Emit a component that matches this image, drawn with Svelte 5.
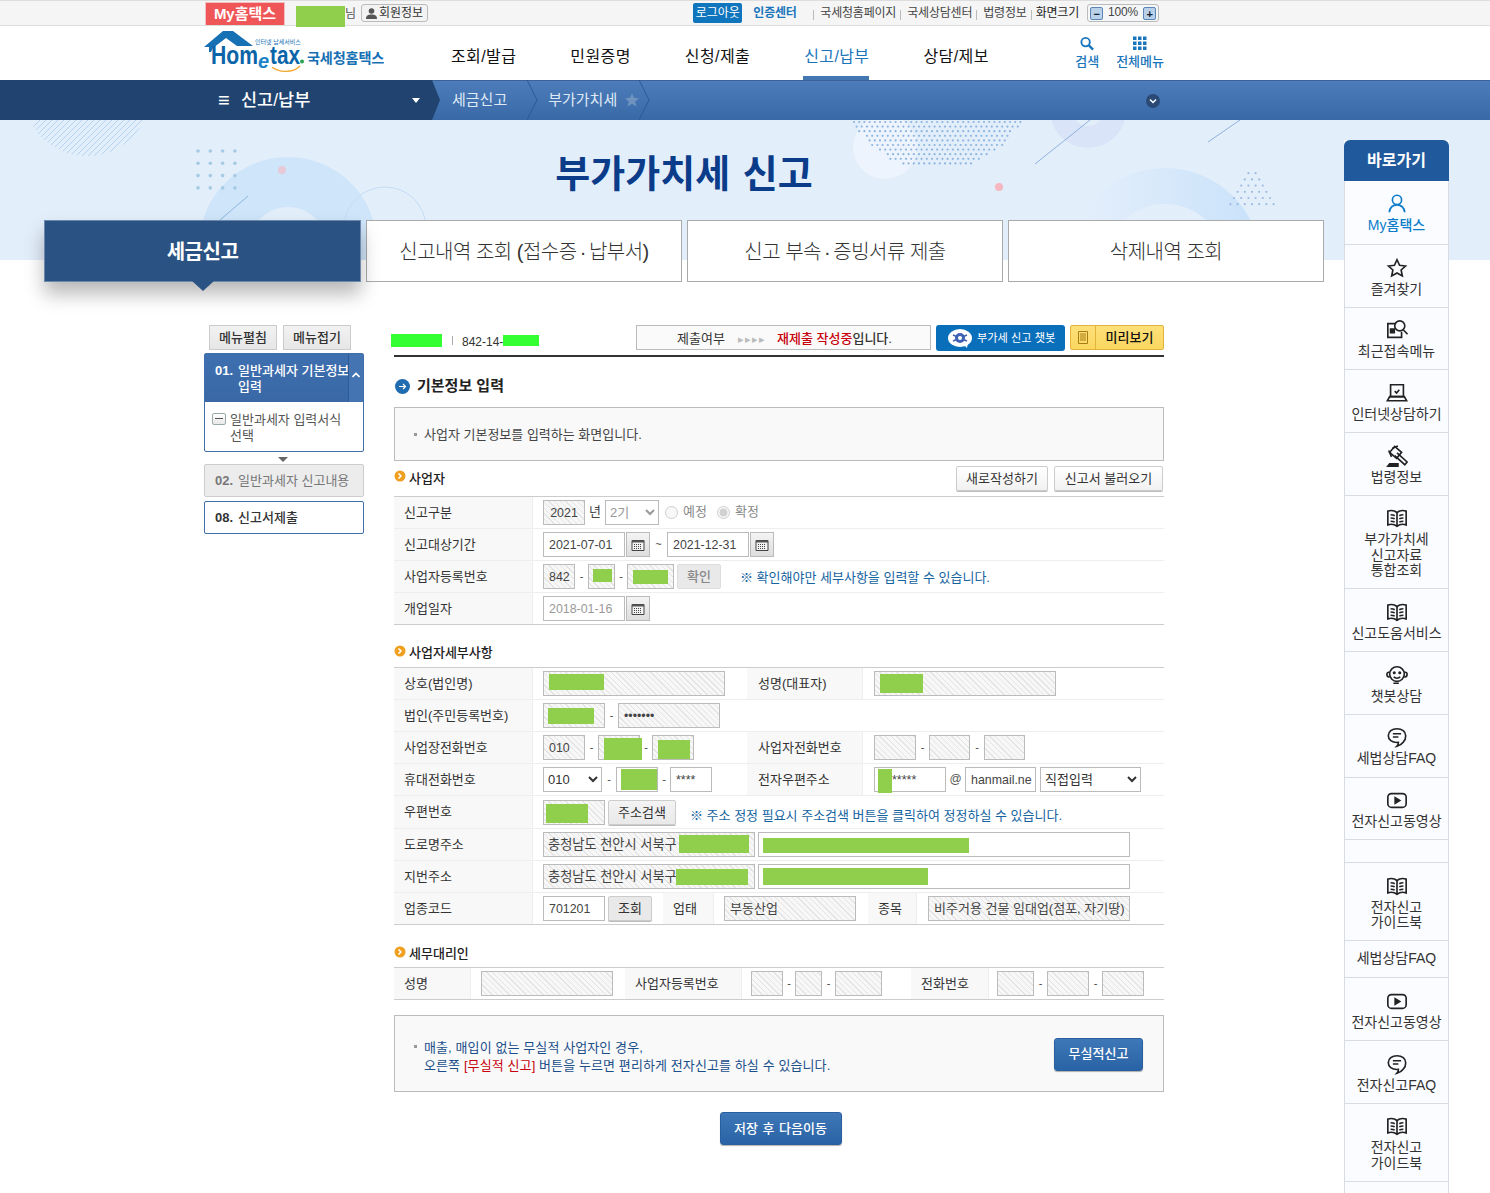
<script>
  const quick = [
    { t: ['My홈택스'], i: 'user', on: true },
    { t: ['즐겨찾기'], i: 'star' },
    { t: ['최근접속메뉴'], i: 'recent' },
    { t: ['인터넷상담하기'], i: 'laptop' },
    { t: ['법령정보'], i: 'gavel' },
    { t: ['부가가치세', '신고자료', '통합조회'], i: 'book' },
    { t: ['신고도움서비스'], i: 'book' },
    { t: ['챗봇상담'], i: 'bot' },
    { t: ['세법상담FAQ'], i: 'chat' },
    { t: ['전자신고동영상'], i: 'video' },
    { t: [], i: '' },
    { t: ['전자신고', '가이드북'], i: 'book' },
    { t: ['세법상담FAQ'], i: '' },
    { t: ['전자신고동영상'], i: 'video' },
    { t: ['전자신고FAQ'], i: 'chat' },
    { t: ['전자신고', '가이드북'], i: 'book' },
    { t: [], i: '' }
  ];
  const nav = ['조회/발급', '민원증명', '신청/제출', '신고/납부', '상담/제보'];
  const gridDots = [];
  for (let r = 0; r < 4; r++) for (let c = 0; c < 4; c++) gridDots.push([198 + c * 12.3, 31 + r * 12.3]);
  const halftone = [];
  for (let r = 0; r < 10; r++) for (let c = 0; c < 33; c++) {
    const x = 854 + c * 5.2 + (r % 2) * 2.6, y = 2 + r * 4.6;
    if (Math.hypot(x - 937, y + 45) < 96) halftone.push([x, y]);
  }
  const triDots = [];
  for (let r = 0; r < 7; r++) for (let c = 0; c <= r; c++) {
    if (r > 0) triDots.push([1252 - r * 3.6 + c * 7.2, 47 + r * 6.2]);
  }
  const hatch = [];
  for (let i = 0; i < 40; i++) hatch.push(i * 6);
</script>

{#snippet box(w, text = '', kind = 'ro', mask = null)}
  <span class="box {kind}" style:width="{w}px">{text}{#if mask}<i class="mask" style:left="{mask[0]}px" style:top="{mask[1]}px" style:width="{mask[2]}px" style:height="{mask[3]}px"></i>{/if}</span>
{/snippet}

{#snippet cal()}
  <button class="cal" type="button" aria-label="달력">
    <svg width="14" height="13" viewBox="0 0 14 13"><path d="M1 2.500h12v10H1z" fill="#f3f3f3" stroke="#444"/><path d="M1 2.500h12v2H1z" fill="#555"/><path d="M3 6.500h8M3 8.500h8M3 10.500h8" stroke="#444" stroke-dasharray="1 1"/></svg>
  </button>
{/snippet}

{#snippet bullet()}
  <svg class="bullet" width="12" height="12" viewBox="0 0 12 12"><circle cx="6" cy="6" r="5.500" fill="#f0a020"/><path d="M4.500 3.500 7 6 4.500 8.500" fill="none" stroke="#fff" stroke-width="1.500"/></svg>
{/snippet}

{#snippet icon(n)}
  <svg class="qi" class:qblue={n === 'user'} width="24" height="24" viewBox="0 0 24 24">
    {#if n === 'user'}
      <circle cx="12" cy="7.500" r="5"/><path d="M3.500 21c.8-5 4-8 8.500-8s7.700 3 8.500 8"/>
    {:else if n === 'star'}
      <path d="M12 3l2.800 6 6.500.8-4.800 4.400 1.300 6.500L12 17.400l-5.800 3.300 1.300-6.500L2.700 9.800 9.200 9z"/>
    {:else if n === 'recent'}
      <path d="M11 5H2v15h15v-6"/><path d="M5 11h4v4H5z" fill="#222"/><circle cx="15" cy="7.500" r="5.500"/><path d="M19 12l4.500 4.500"/>
    {:else if n === 'laptop'}
      <path d="M5 3h14v13H5z"/><path d="M1.500 20.500h21l-2.500-4.500H4z"/><path d="M9.500 10l2 2 3-3.500"/>
    {:else if n === 'gavel'}
      <path d="M9.500 1.500l7.500 6.500-5.500 6.500L4 8z"/><path d="M7 3.500 13 1M3 6l3 7"/><path d="M12 8.500l11 10-2.500 3-11-10"/><path d="M2 23h11v-2.500H4z" fill="#222"/>
    {:else if n === 'book'}
      <path d="M12 6C9.500 4 5 3.500 2 4.500v15c3-1 7.500-.5 10 1.500 2.500-2 7-2.500 10-1.500v-15C19 3.500 14.500 4 12 6z"/><path d="M12 6v15M5 8.500c1.500 0 3 0 4.500 1M5 12c1.500 0 3 0 4.500 1M5 15.500c1.500 0 3 0 4.500 1M19 8.500c-1.500 0-3 0-4.500 1M19 12c-1.500 0-3 0-4.500 1M19 15.500c-1.500 0-3 0-4.500 1"/>
    {:else if n === 'bot'}
      <circle cx="12" cy="11" r="8"/><path d="M4 9H3c-1 0-2 1-2 2.500S2 14 3 14h1M20 9h1c1 0 2 1 2 2.500S22 14 21 14h-1M8.500 14c1.500 2 5.500 2 7 0M8 21h6"/><circle cx="9" cy="9.500" r=".8"/><circle cx="15" cy="9.500" r=".8"/>
    {:else if n === 'chat'}
      <path d="M12 3c-5.500 0-9.500 3.200-9.500 7.500S6.500 18 12 18c.6 0 1 0 1.500-.1 0 1.500-.5 3-1.500 4.100 3-.9 5.500-2.500 7-4.600 1.500-1.500 2.500-3.700 2.500-6.900C21.500 6.200 17.500 3 12 3z"/><path d="M7.500 8.500h9M7.500 12h6"/>
    {:else if n === 'video'}
      <rect x="2" y="5" width="20" height="15" rx="4"/><path d="M10 9.500l5 3-5 3z" fill="#222"/>
    {/if}
  </svg>
{/snippet}

<div class="root">
  <div class="top">
    <div class="inner topin">
      <a class="my">My홈택스</a>
      <span class="who"><i class="mask whomask"></i>님</span>
      <button class="memb" type="button">
        <svg width="11" height="11" viewBox="0 0 11 11"><circle cx="5.500" cy="3" r="2.800" fill="#555"/><path d="M0 11c0-3.500 2-4.500 5.500-4.500S11 7.500 11 11z" fill="#555"/></svg>회원정보
      </button>
      <span class="grow"></span>
      <a class="logout">로그아웃</a>
      <a class="cert">인증센터</a>
      <a class="tl first">국세청홈페이지</a>
      <a class="tl">국세상담센터</a>
      <a class="tl">법령정보</a>
      <a class="tl dark">화면크기</a>
      <span class="zoom"><b>−</b><em>100%</em><b>+</b></span>
    </div>
  </div>

  <header class="head">
    <div class="inner headin">
      <div class="logo">
        <svg width="180" height="52" viewBox="0 0 180 52">
          <path d="M0 17 19 1h10l20 15H33L22 8 9 18 7 22H5V17z" fill="#1670b4"/>
          <text x="51" y="14" class="lgtiny">인터넷 납세서비스</text>
          <text x="7" y="33.500" class="lgmain" textLength="47" lengthAdjust="spacingAndGlyphs">Hom</text>
          <text x="54" y="38" class="lge">e</text>
          <text x="66" y="33.500" class="lgmain" textLength="30" lengthAdjust="spacingAndGlyphs">tax</text>
          <circle cx="98" cy="31.500" r="2" fill="#2da44e"/>
          <path d="M68 37c6 5 20 7 28-1" fill="none" stroke="#f0a830" stroke-width="1.300"/>
          <text x="103" y="33" class="lgname">국세청홈택스</text>
        </svg>
      </div>
      <nav class="gnb">
        {#each nav as n, i}
          <a class:act={i === 3}>{n}</a>
        {/each}
      </nav>
      <span class="grow"></span>
      <a class="tool t1">
        <svg width="16" height="16" viewBox="0 0 16 16"><circle cx="6.500" cy="6.500" r="4.500" fill="none" stroke="#1b75bb" stroke-width="2"/><path d="M10 10l4.500 4.500" stroke="#1b75bb" stroke-width="2.500"/></svg>
        검색
      </a>
      <a class="tool">
        <svg width="14" height="14" viewBox="0 0 14 14" fill="#1b75bb"><path d="M0 0h3.500v3.500H0zM5 0h3.500v3.500H5zM10 0h3.500v3.500H10zM0 5h3.500v3.500H0zM5 5h3.500v3.500H5zM10 5h3.500v3.500H10zM0 10h3.500v3.500H0zM5 10h3.500v3.500H5zM10 10h3.500v3.500H10z"/></svg>
        전체메뉴
      </a>
    </div>
  </header>

  <div class="lnb">
    <div class="lnbdark">
      <span class="burger">≡</span>
      <strong>신고/납부</strong>
      <i class="caret"></i>
    </div>
    <div class="crumb">
      <span>세금신고</span>
      <svg class="chev" width="11" height="40" viewBox="0 0 11 40"><path d="M0 0l10 20L0 40" fill="none" stroke="#2c5a94"/></svg>
      <span class="c2">부가가치세</span>
      <svg class="cstar" width="14" height="14" viewBox="0 0 14 14"><path d="M7 0l2 4.700 5 .5-3.800 3.300 1.200 5L7 10.800 2.600 13.500l1.200-5L0 5.200l5-.5z" fill="#6f93bf"/></svg>
      <svg class="chev" width="11" height="40" viewBox="0 0 11 40"><path d="M0 0l10 20L0 40" fill="none" stroke="#2c5a94"/></svg>
    </div>
    <span class="more"><svg width="14" height="14" viewBox="0 0 14 14"><circle cx="7" cy="7" r="7" fill="#2a4a75"/><path d="M4 5.500 7 8.500l3-3" fill="none" stroke="#fff" stroke-width="1.500"/></svg></span>
  </div>

  <section class="hero">
    <svg class="decor" width="1490" height="140" viewBox="0 0 1490 140" aria-hidden="true">
      <defs>
        <clipPath id="qc"><circle cx="87" cy="-28" r="64"/></clipPath>
        <linearGradient id="rg" x1="0" x2="1"><stop offset="0" stop-color="#e3eefb"/><stop offset="1" stop-color="#cbe3fa"/></linearGradient>
      </defs>
      <g clip-path="url(#qc)" stroke="#b6d2ee" stroke-width="1">
        {#each hatch as h}<path d="M{h} 40 L{h + 50} -10"/>{/each}
      </g>
      <circle cx="288" cy="126" r="64" fill="none" stroke="#cfe5f9" stroke-width="50"/>
      <circle cx="385" cy="108" r="41" fill="none" stroke="#c4dcf5"/>
      {#each gridDots as d}<circle cx={d[0]} cy={d[1]} r="1.800" fill="#a5cbe4"/>{/each}
      <circle cx="282" cy="50" r="4" fill="#e7c9d8"/>
      <path d="M220 100 L248 76" stroke="#8fb6e0"/>
      <circle cx="885" cy="27" r="32" fill="#edf4fd"/>
      {#each halftone as d}<circle cx={d[0]} cy={d[1]} r="1.100" fill="#8db5e0"/>{/each}
      <circle cx="1088" cy="-10" r="27" fill="none" stroke="#dae4f8" stroke-width="22"/>
      <path d="M1035 44 L1090 0M1208 22 L1240 0" stroke="#8fb0de"/>
      <circle cx="999" cy="67" r="4" fill="#f5b8c0"/>
      <circle cx="1165" cy="144" r="78" fill="none" stroke="url(#rg)" stroke-width="36"/>
      {#each triDots as d}<circle cx={d[0]} cy={d[1]} r="1.100" fill="#9dbbe0"/>{/each}
    </svg>
    <h1>부가가치세 신고</h1>
  </section>

  <div class="wrap">
    <div class="tabs">
      <a class="tab on"><span>세금신고</span></a>
      <a class="tab"><span>신고내역 조회 (접수증<span class="mid">{' · '}</span>납부서)</span></a>
      <a class="tab"><span>신고 부속<span class="mid">{' · '}</span>증빙서류 제출</span></a>
      <a class="tab"><span>삭제내역 조회</span></a>
    </div>

    <div class="body">
      <aside class="side">
        <div class="sidebtns">
          <button type="button">메뉴펼침</button>
          <button type="button">메뉴접기</button>
        </div>
        <div class="step open">
          <div class="stephead">
            <b>01.</b><span>일반과세자 기본정보 입력</span>
            <i class="updown"><svg width="8" height="6" viewBox="0 0 8 6"><path d="M.5 5 4 1.500 7.500 5" fill="none" stroke="#fff" stroke-width="1.600"/></svg></i>
          </div>
          <div class="stepbody">
            <i class="minus"></i><span>일반과세자 입력서식 선택</span>
          </div>
        </div>
        <i class="down"></i>
        <div class="step off"><b>02.</b><span>일반과세자 신고내용</span></div>
        <div class="step last"><b>08.</b><span>신고서제출</span></div>
      </aside>

      <main class="main">
        <div class="status">
          <span class="idblock">
            <i class="mask idm1"></i><span class="pipe"></span><span class="bizno">842-14-</span><i class="mask idm2"></i>
          </span>
          <span class="submit">제출여부 <em>▸▸▸▸</em> <strong>재제출 작성중</strong><b>입니다.</b></span>
          <button class="bot" type="button">
            <svg width="26" height="20" viewBox="0 0 26 20"><ellipse cx="13" cy="10" rx="12" ry="9" fill="#fff"/><path d="M17 17l3 3 1-5z" fill="#fff"/><circle cx="13" cy="10" r="5" fill="#3f62b5"/><path d="M6 7l14 6M20 7 6 13" stroke="#3f62b5" stroke-width="1.500"/><circle cx="13" cy="10" r="2" fill="#fff"/></svg>
            부가세 신고 챗봇
          </button>
          <button class="preview" type="button">
            <i><svg width="10" height="13" viewBox="0 0 10 13"><path d="M.5.500h9v12h-9z" fill="none" stroke="#a87c12"/><path d="M2 3h6M2 5h6M2 7h6M2 9h6" stroke="#a87c12"/></svg></i>
            <span>미리보기</span>
          </button>
        </div>

        <h2 class="title">
          <svg width="15" height="15" viewBox="0 0 15 15"><circle cx="7.500" cy="7.500" r="7.500" fill="#1f6cb0"/><path d="M4 7.500h6.500M8 5l2.500 2.500L8 10" fill="none" stroke="#fff" stroke-width="1.200"/></svg>
          기본정보 입력
        </h2>
        <div class="info"><span class="sq"></span>사업자 기본정보를 입력하는 화면입니다.</div>

        <div class="sech first">
          {@render bullet()}<h3>사업자</h3>
          <span class="grow"></span>
          <button class="gbtn g1" type="button">새로작성하기</button>
          <button class="gbtn g2" type="button">신고서 불러오기</button>
        </div>
        <div class="tbl">
          <div class="row r2">
            <div class="th">신고구분</div>
            <div class="td">
              {@render box(42, '2021', 'ro center')}
              <span class="unit">년</span>
              <select disabled class="sel s1"><option>2기</option></select>
              <label class="rad r1"><input type="radio" disabled />예정</label>
              <label class="rad"><input type="radio" disabled checked />확정</label>
            </div>
          </div>
          <div class="row r2">
            <div class="th">신고대상기간</div>
            <div class="td">
              {@render box(82, '2021-07-01', 'plain')}{@render cal()}
              <span class="tilde">~</span>
              {@render box(82, '2021-12-31', 'plain')}{@render cal()}
            </div>
          </div>
          <div class="row r2">
            <div class="th">사업자등록번호</div>
            <div class="td">
              {@render box(32, '842', 'ro')}
              <span class="dash d13">-</span>
              {@render box(27, '', 'ro', [4, 4, 19, 13])}
              <span class="dash d12">-</span>
              {@render box(47, '', 'ro', [5, 5, 35, 14])}
              <button class="gbtn check" type="button">확인</button>
              <span class="note n1">※ 확인해야만 세부사항을 입력할 수 있습니다.</span>
            </div>
          </div>
          <div class="row r2 end">
            <div class="th">개업일자</div>
            <div class="td">
              {@render box(82, '2018-01-16', 'plain gray')}{@render cal()}
            </div>
          </div>
        </div>

        <div class="sech">{@render bullet()}<h3>사업자세부사항</h3></div>
        <div class="tbl">
          <div class="row r4">
            <div class="th">상호(법인명)</div>
            <div class="td">{@render box(182, '', 'ro', [5, 2, 55, 16])}</div>
            <div class="th">성명(대표자)</div>
            <div class="td x">{@render box(182, '', 'ro', [5, 2, 43, 19])}</div>
          </div>
          <div class="row r2">
            <div class="th">법인(주민등록번호)</div>
            <div class="td">
              {@render box(62, '', 'ro', [4, 4, 46, 16])}
              <span class="dash d13">-</span>
              {@render box(102, '•••••••', 'ro')}
            </div>
          </div>
          <div class="row r4">
            <div class="th">사업장전화번호</div>
            <div class="td">
              {@render box(42, '010', 'ro')}
              <span class="dash d13">-</span>
              {@render box(42, '', 'ro', [5, 2, 38, 22])}
              <span class="dash d12">-</span>
              {@render box(42, '', 'ro', [5, 4, 32, 19])}
            </div>
            <div class="th">사업자전화번호</div>
            <div class="td x">
              {@render box(42)}<span class="dash d13">-</span>{@render box(41)}<span class="dash d14">-</span>{@render box(41)}
            </div>
          </div>
          <div class="row r4">
            <div class="th">휴대전화번호</div>
            <div class="td">
              <select class="sel s2"><option>010</option></select>
              <span class="dash d14">-</span>
              {@render box(42, '', 'plain', [4, 1, 36, 21])}
              <span class="dash d12">-</span>
              {@render box(42, '****', 'plain')}
            </div>
            <div class="th">전자우편주소</div>
            <div class="td x">
              {@render box(72, '*****', 'plain mailid', [3, 1, 14, 24])}
              <span class="at">@</span>
              {@render box(71, 'hanmail.ne', 'plain clip')}
              <select class="sel s3"><option>직접입력</option></select>
            </div>
          </div>
          <div class="row r4 tall">
            <div class="th">우편번호</div>
            <div class="td span3">
              {@render box(62, '', 'ro', [2, 3, 42, 19])}
              <button class="gbtn addr" type="button">주소검색</button>
              <span class="note n2">※ 주소 정정 필요시 주소검색 버튼을 클릭하여 정정하실 수 있습니다.</span>
            </div>
          </div>
          <div class="row r2">
            <div class="th">도로명주소</div>
            <div class="td">
              {@render box(212, '충청남도 천안시 서북구', 'ro small wide', [135, 2, 70, 18])}
              <span class="dash d3"></span>
              {@render box(372, '', 'plain', [4, 5, 206, 15])}
            </div>
          </div>
          <div class="row r2">
            <div class="th">지번주소</div>
            <div class="td">
              {@render box(212, '충청남도 천안시 서북구', 'ro small wide', [132, 4, 72, 16])}
              <span class="dash d3"></span>
              {@render box(372, '', 'plain', [4, 3, 165, 17])}
            </div>
          </div>
          <div class="row r6 end">
            <div class="th">업종코드</div>
            <div class="td">
              {@render box(62, '701201', 'plain')}
              <button class="gbtn look" type="button">조회</button>
            </div>
            <div class="th">업태</div>
            <div class="td">{@render box(132, '부동산업', 'ro small')}</div>
            <div class="th">종목</div>
            <div class="td x">{@render box(202, '비주거용 건물 임대업(점포, 자기땅)', 'ro small')}</div>
          </div>
        </div>

        <div class="sech third">{@render bullet()}<h3>세무대리인</h3></div>
        <div class="tbl">
          <div class="row r3 end">
            <div class="th">성명</div>
            <div class="td">{@render box(132)}</div>
            <div class="th">사업자등록번호</div>
            <div class="td x2">
              {@render box(32)}<span class="dash d12">-</span>{@render box(27)}<span class="dash d13">-</span>{@render box(47)}
            </div>
            <div class="th">전화번호</div>
            <div class="td x3">
              {@render box(37)}<span class="dash d13">-</span>{@render box(42)}<span class="dash d13">-</span>{@render box(42)}
            </div>
          </div>
        </div>

        <div class="nil">
          <p><span class="sq"></span>매출, 매입이 없는 무실적 사업자인 경우,<br />오른쪽 <strong>[무실적 신고]</strong> 버튼을 누르면 편리하게 전자신고를 하실 수 있습니다.</p>
          <button class="blue" type="button">무실적신고</button>
        </div>
        <div class="next"><button class="blue big" type="button">저장 후 다음이동</button></div>
      </main>
    </div>
  </div>

  <aside class="quick">
    <div class="qh">바로가기</div>
    {#each quick as q}
      <a class="qit" class:on={q.on} class:blank={!q.t.length} class:textonly={q.t.length && !q.i}>
        {#if q.i}{@render icon(q.i)}{/if}
        {#each q.t as l}<span>{l}</span>{/each}
      </a>
    {/each}
  </aside>
</div>

<style>
  :global(html), :global(body) { margin: 0; overflow: hidden; }
  .root {
    position: relative; width: 1490px; height: 1193px; overflow: hidden; background: #fff;
    font: 13px/1.3 "Liberation Sans", "Noto Sans CJK KR", sans-serif; color: #333;
  }
  button { font: inherit; cursor: pointer; padding: 0; }
  .grow { flex: 1; }
  .inner { width: 960px; margin-left: 204px; display: flex; align-items: center; }
  .mask { position: absolute; display: block; background: #90cf4c; }

  .top { height: 24px; background: #f5f5f5; border-top: 1px solid #ddd; border-bottom: 1px solid #ddd; }
  .topin { height: 24px; font-size: 12px; letter-spacing: -.2px; }
  .my {
    width: 78px; height: 22px; margin: 1px 0 0 1px; background: #ef5658; border: 1px solid #f2c0c0; border-bottom: 0;
    color: #fff; font-weight: 700; font-size: 15px; text-align: center; line-height: 22px; letter-spacing: 0;
  }
  .who { position: relative; margin-left: 60px; color: #555; width: 16px; padding-top: 4px; }
  .whomask { left: -49px; top: 3px; width: 49px; height: 21px; }
  .memb {
    display: flex; align-items: center; gap: 2px; margin-left: 0; height: 18px; width: 67px; justify-content: center; padding-top: 1px;
    background: #f3f3f3; border: 1px solid #bbb; border-radius: 3px; color: #333; font-size: 12px;
  }
  .logout { width: 49px; height: 20px; background: #0f75bc; color: #fff; text-align: center; line-height: 21px; border-radius: 2px; font-size: 12px; letter-spacing: 0; }
  .cert { margin-left: 11px; color: #1b75bb; font-weight: 700; width: 67px; padding-top: 2px; }
  .tl { position: relative; padding-left: 11px; padding-top: 2px; color: #444; }
  .tl::before { content: ""; position: absolute; left: 4px; top: 6px; width: 1px; height: 10px; background: #bbb; }
  .tl.first { padding-left: 0; }
  .tl.first::before { left: -7px; }
  .tl.dark { color: #222; padding-left: 9px; margin-right: 8px; }
  .zoom {
    width: 72px; height: 18px; border: 1px solid #bbb; border-radius: 3px; box-sizing: border-box; display: flex; align-items: center;
    justify-content: space-between; padding: 0 2px; background: #f4f6f8; margin-right: 5px; font-size: 12px;
  }
  .zoom b { width: 13px; height: 13px; border: 1px solid #5b86b5; border-radius: 2px; background: #b9d2ea; font: 700 11px/12px "Liberation Sans"; text-align: center; box-sizing: border-box; color: #123; }
  .zoom em { font-style: normal; color: #444; }

  .head { height: 54px; background: #fff; }
  .headin { height: 54px; position: relative; }
  .logo { width: 247px; height: 52px; margin-top: 6px; flex: none; }
  .lgtiny { font-size: 6px; fill: #1670b4; }
  .lgmain { font: 700 25px "Liberation Sans", sans-serif; fill: #0a64a8; }
  .lge { font: italic 700 20px "Liberation Sans", sans-serif; fill: #1d83c7; }
  .lgname { font: 700 14.200px "Noto Sans CJK KR", sans-serif; fill: #1670b4; letter-spacing: -.2px; }
  .gnb { display: flex; gap: 54px; height: 54px; }
  .gnb a { position: relative; font-size: 16px; line-height: 61px; color: #111; white-space: nowrap; letter-spacing: .4px; }
  .gnb a.act { color: #1b75bb; }
  .gnb a.act::after { content: ""; position: absolute; left: -1px; right: 0; bottom: 0; height: 4px; background: #4476b2; }
  .tool { display: flex; flex-direction: column; align-items: center; color: #1b75bb; font-size: 13px; gap: 3px; line-height: 16px; padding-top: 0; margin-top: -1px; font-weight: 500; }
  .tool svg { height: 15px; }
  .t1 { margin-right: 17px; }

  .lnb {
    position: relative; height: 40px; display: flex; align-items: center;
    background: linear-gradient(#4c7dba, #3a69a8); box-shadow: inset 0 1px 0 #3a6298;
  }
  .lnbdark {
    width: 440px; height: 40px; flex: none; box-sizing: border-box; padding-left: 218px; display: flex; align-items: center;
    background: #20446f; clip-path: polygon(0 0, 432px 0, 440px 50%, 432px 100%, 0 100%); color: #fff; position: relative;
  }
  .burger { font: 700 20px/1 "Liberation Sans", "DejaVu Sans", sans-serif; width: 23px; }
  .lnbdark strong { font-size: 17.500px; font-weight: 500; }
  .caret { position: absolute; left: 412px; top: 18px; border: 4px solid transparent; border-top: 5px solid #fff; border-bottom: 0; }
  .crumb { display: flex; align-items: center; margin-left: 12px; color: #dfe9f5; font-size: 15px; }
  .crumb .chev { margin: 0 0 0 20px; }
  .crumb .c2 { margin-left: 10px; }
  .crumb .cstar { margin: 0 0 0 8px; }
  .crumb .cstar + .chev { margin-left: 0; }
  .more { position: absolute; left: 1146px; top: 14px; line-height: 0; }

  .hero { position: relative; height: 140px; background: #e3eefb; overflow: hidden; }
  .decor { position: absolute; left: 0; top: 0; }
  .hero h1 {
    position: relative; width: 1280px; margin: 0 0 0 44px; padding-top: 26px; text-align: center;
    font-size: 38px; line-height: 56px; font-weight: 700; color: #0a3c8a; word-spacing: 2px;
  }

  .wrap { width: 1280px; margin: -40px 0 0 44px; position: relative; }
  .tabs { display: grid; grid-template-columns: 317px repeat(3, 316px); gap: 5px; height: 62px; }
  .tab {
    display: flex; align-items: center; justify-content: center; box-sizing: border-box; white-space: pre; padding-top: 2px;
    background: #fff; border: 1px solid #aaa; font-size: 20px; color: #333; letter-spacing: -.5px; font-weight: 300;
  }
  .mid { margin: 0 -2px; }
  .tab.on { position: relative; background: #2a5282; border-color: #6c88aa; color: #fff; font-weight: 700; box-shadow: 0 12px 18px rgba(0, 0, 0, .28); }
  .tab.on::after { content: ""; position: absolute; left: 147px; bottom: -10px; border: 11px solid transparent; border-top: 10px solid #2a5282; border-bottom: 0; }

  .body { display: flex; gap: 30px; margin: 43px 0 0 160px; }
  .side { width: 160px; flex: none; }
  .sidebtns { display: flex; gap: 6px; margin-left: 5px; margin-bottom: 3px; }
  .sidebtns button { width: 68px; height: 25px; background: linear-gradient(#f2f2f2, #e6e6e6); border: 1px solid #ccc; color: #333; font-weight: 500; font-size: 13px; padding-top: 1px; }
  .step { box-sizing: border-box; border: 1px solid #3f6eab; border-radius: 2px; font-weight: 700; font-size: 13px; }
  .step b { margin-right: 5px; }
  .stephead {
    position: relative; height: 48px; box-sizing: border-box; padding: 9px 15px 0 10px; display: flex; align-items: flex-start;
    background: linear-gradient(#3e6faf, #3a68a6); color: #fff; line-height: 16px; font-weight: 500;
  }
  .stephead span { width: 112px; flex: none; }
  .updown { position: absolute; right: 0; top: 0; bottom: 0; width: 14px; background: #4474b2; border-left: 1px solid #2f5b94; display: flex; align-items: center; justify-content: center; }
  .updown svg { margin-top: -6px; }
  .stepbody { position: relative; height: 49px; box-sizing: border-box; padding: 10px 14px 0 25px; font-weight: 400; font-size: 13px; line-height: 16px; color: #555; }
  .minus { position: absolute; left: 7px; top: 11px; width: 14px; height: 12px; border: 1px solid #9aa; border-radius: 2px; background: linear-gradient(#fff, #e8e8e8); box-sizing: border-box; }
  .minus::after { content: ""; position: absolute; left: 2px; right: 2px; top: 4px; height: 1px; background: #555; }
  .down { display: block; width: 0; margin: 5px auto 2px; border: 5px solid transparent; border-top: 5px solid #666; border-bottom: 0; position: relative; left: -1px; }
  .step.off, .step.last { height: 33px; display: flex; align-items: center; padding: 2px 0 0 10px; font-weight: 500; }
  .step.off { background: #ececec; border-color: #ccc; color: #777; }
  .step.off span { font-weight: 400; }
  .step.last { margin-top: 4px; color: #333; }

  .main { width: 770px; flex: none; }
  .status { display: flex; height: 26px; position: relative; border-bottom: 2px solid #333; padding-bottom: 4px; }
  .idblock { position: relative; width: 242px; flex: none; }
  .idm1 { left: -3px; top: 9px; width: 51px; height: 13px; background: #33ff33; }
  .idm2 { left: 109px; top: 10px; width: 36px; height: 11px; background: #33ff33; }
  .pipe { position: absolute; left: 58px; top: 11px; width: 1px; height: 9px; background: #aaa; }
  .bizno { position: absolute; left: 68px; top: 10px; font-size: 12px; }
  .submit {
    width: 295px; height: 25px; box-sizing: border-box; border: 1px solid #bbb; background: #fafafa; flex: none;
    line-height: 25px; padding-left: 40px; font-size: 13px; color: #333; white-space: nowrap;
  }
  .submit em { font-style: normal; color: #bbb; font-size: 11px; margin: 0 7px 0 10px; letter-spacing: 1px; }
  .submit strong { color: #c8000a; font-weight: 500; }
  .submit b { font-weight: 500; }
  .bot {
    margin-left: 5px; width: 129px; height: 26px; flex: none; display: flex; align-items: center; gap: 4px; padding-left: 11px; box-sizing: border-box;
    background: #0a6fbb; border: 0; border-radius: 3px; color: #fff; font-size: 11.200px; white-space: nowrap;
  }
  .preview {
    margin-left: 5px; width: 94px; height: 25px; flex: none; display: flex; box-sizing: border-box;
    background: linear-gradient(#fde07a, #fbd75f); border: 1px solid #e3b43a; border-radius: 2px; color: #111; font-weight: 500; font-size: 13px;
  }
  .preview i { width: 24px; height: 23px; border-right: 1px solid #e3b43a; display: flex; align-items: center; justify-content: center; }
  .preview span { flex: 1; line-height: 24px; }

  .title { display: flex; align-items: center; gap: 7px; margin: 19px 0 11px 1px; height: 20px; font-size: 15px; font-weight: 700; color: #222; }
  .info { box-sizing: border-box; height: 54px; border: 1px solid #bbb; background: #f9f9f9; padding: 18px 0 0 19px; font-size: 13px; line-height: 18px; color: #444; }
  .sq { display: inline-block; width: 3px; height: 3px; background: #999; margin: 0 7px 3px 0; vertical-align: middle; }

  .sech { display: flex; align-items: center; height: 20px; margin: 18px 0 4px; }
  .sech.first { height: 25px; margin: 5px 0 5px; padding-right: 1px; }
  .sech.third { margin: 19px 0 3px; }
  .sech h3 { margin: 0 0 0 3px; padding-top: 1px; font-size: 13px; font-weight: 500; color: #222; }
  .bullet { margin-top: -5px; }
  .gbtn { height: 25px; background: linear-gradient(#fff, #f1f1f1); border: 1px solid #ccc; border-radius: 2px; color: #333; font-size: 13px; box-shadow: 0 1px 0 #bbb; flex: none; padding-top: 2px; }
  .g1 { width: 92px; }
  .g2 { width: 109px; margin-left: 6px; }

  .tbl { border-top: 1px solid #ccc; }
  .row { display: grid; height: 32px; box-sizing: border-box; border-bottom: 1px solid #eee; }
  .row.end { border-bottom-color: #ccc; }
  .row.tall { height: 33px; }
  .r2 { grid-template-columns: 139px 1fr; }
  .r4 { grid-template-columns: 139px 214px 116px 1fr; }
  .r6 { grid-template-columns: 139px 130px 51px 154px 49px 1fr; }
  .r3 { grid-template-columns: 77px 154px 117px 169px 78px 1fr; }
  .th { background: #f8f8f8; border-right: 1px solid #eee; display: flex; align-items: center; padding: 1px 0 0 10px; box-sizing: border-box; font-size: 13px; color: #333; white-space: nowrap; }
  .r4 .th:nth-child(3) { padding-left: 11px; }
  .td { display: flex; align-items: center; padding-left: 10px; min-width: 0; white-space: nowrap; }
  .td.span3 { grid-column: 2 / -1; }
  .td.x { padding-left: 11px; }
  .td.x2 { padding-left: 9px; }
  .td.x3 { padding-left: 8px; }

  .box {
    position: relative; box-sizing: border-box; height: 25px; flex: none; border: 1px solid #bbb; background: #fff;
    padding-left: 5px; line-height: 25px; font-size: 12.400px; color: #444; white-space: nowrap; letter-spacing: 0;
  }
  .box.ro { background: repeating-linear-gradient(45deg, #f7f7f7 0 3px, #e4e4e4 3px 4px); }
  .box.center { text-align: center; padding-left: 0; }
  .box.gray { color: #999; }
  .box.small { font-size: 13px; line-height: 24px; }
  .box.wide { font-size: 13.200px; padding-left: 4px; }
  .box.clip { overflow: hidden; }
  .box.mailid { padding-left: 17px; font-size: 12.500px; }
  .unit { margin: 0 4px; font-size: 13px; color: #444; }
  .sel { box-sizing: border-box; height: 25px; border: 1px solid #bbb; background: #fff; font: 13px "Liberation Sans", "Noto Sans CJK KR", sans-serif; color: #333; border-radius: 0; padding-left: 0; }
  .s1 { width: 54px; color: #999; opacity: 1; }
  .s2 { width: 59px; }
  .s3 { width: 101px; margin-left: 4px; }
  .rad { display: flex; align-items: center; color: #888; font-size: 13px; width: 52px; }
  .r1 { margin-left: 6px; }
  .rad input { margin: 0 5px 0 0; }
  .cal { width: 24px; height: 25px; margin-left: 1px; background: linear-gradient(#f4f4f4, #ddd); border: 1px solid #bbb; display: flex; align-items: center; justify-content: center; flex: none; }
  .tilde { width: 17px; text-align: center; font-size: 11px; color: #444; }
  .dash { text-align: center; color: #444; font-size: 11px; flex: none; }
  .d13 { width: 13px; }
  .d12 { width: 12px; }
  .d14 { width: 14px; }
  .d3 { width: 3px; }
  .check { width: 44px; margin-left: 3px; background: #e9e9e9; color: #888; border-color: #ddd; box-shadow: none; font-weight: 500; }
  .note { color: #15639f; font-size: 13px; }
  .n1 { margin-left: 19px; padding-top: 3px; }
  .n2 { margin-left: 14px; padding-top: 9px; }
  .at { width: 19px; text-align: center; color: #555; font-size: 12px; flex: none; }
  .addr { width: 68px; margin-left: 3px; background: linear-gradient(#f3f3f3, #e9e9e9); }
  .look { width: 44px; margin-left: 3px; background: #e9e9e9; }

  .nil {
    box-sizing: border-box; height: 77px; margin-top: 15px; border: 1px solid #bbb; background: #f9f9f9;
    display: flex; align-items: center; justify-content: space-between; padding: 0 20px 0 19px;
  }
  .nil p { margin: 0; color: #1a4f8a; font-size: 13px; line-height: 18px; padding: 6px 0 0 10px; text-indent: -10px; letter-spacing: .1px; }
  .nil strong { color: #c8000a; font-weight: 400; }
  .blue {
    width: 89px; height: 33px; background: linear-gradient(#3f78b8, #2a63a5); border: 1px solid #2a5f9f; border-radius: 3px;
    color: #fff; font-weight: 500; font-size: 13px; box-shadow: 0 1px 1px rgba(0, 0, 0, .3); padding-top: 1px;
  }
  .nil .blue { margin-top: 1px; }
  .next { display: flex; justify-content: center; margin: 20px 0 0 3px; }
  .big { width: 122px; word-spacing: 1px; }

  .quick {
    position: absolute; left: 1344px; top: 140px; width: 105px;
    box-sizing: border-box; background: #fbfcff;
  }
  .qh { height: 41px; background: #205a9d; border-radius: 6px 6px 0 0; color: #fff; font-weight: 700; font-size: 16px; text-align: center; line-height: 42px; }
  .qit {
    display: flex; flex-direction: column; align-items: center; box-sizing: border-box;
    padding: 11.500px 0 9.700px; border: 1px solid #d8dde3; border-top: 0; font-size: 14px; line-height: 15.500px; color: #333; white-space: nowrap; min-height: 62.700px;
  }
  .qit.on { color: #0c7cc9; font-weight: 500; min-height: 64px; }
  .qit.blank { padding: 0; min-height: 23px; }
  .qit.textonly { padding: 10px 0; min-height: 37px; }
  .qi { fill: none; stroke: #222; stroke-width: 1.800; width: 22px; height: 22px; margin-bottom: 3px; flex: none; }
  .qi.qblue { stroke: #0c7cc9; }
</style>
